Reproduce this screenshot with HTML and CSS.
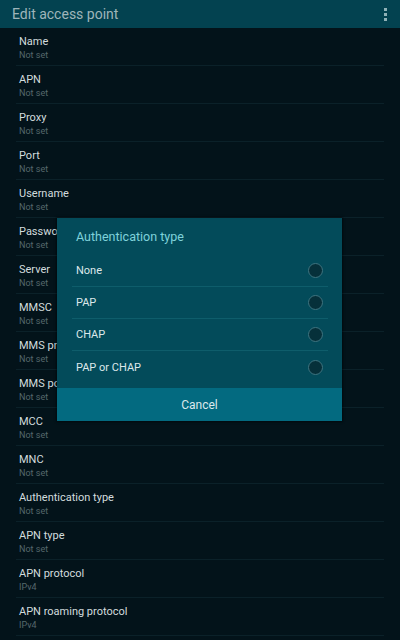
FILE: index.html
```html
<!DOCTYPE html>
<html>
<head>
<meta charset="utf-8">
<link rel="stylesheet" href="styles.css">
</head>
<body>
<div class="screen">
  <header class="appbar">
    <span class="title">Edit access point</span>
    <span class="menu"><i></i><i></i><i></i></span>
  </header>
  <ul class="list">
    <li class="row"><span class="label">Name</span><span class="value">Not set</span></li>
    <li class="row"><span class="label">APN</span><span class="value">Not set</span></li>
    <li class="row"><span class="label">Proxy</span><span class="value">Not set</span></li>
    <li class="row"><span class="label">Port</span><span class="value">Not set</span></li>
    <li class="row"><span class="label">Username</span><span class="value">Not set</span></li>
    <li class="row"><span class="label">Password</span><span class="value">Not set</span></li>
    <li class="row"><span class="label">Server</span><span class="value">Not set</span></li>
    <li class="row"><span class="label">MMSC</span><span class="value">Not set</span></li>
    <li class="row"><span class="label">MMS proxy</span><span class="value">Not set</span></li>
    <li class="row"><span class="label">MMS port</span><span class="value">Not set</span></li>
    <li class="row"><span class="label">MCC</span><span class="value">Not set</span></li>
    <li class="row"><span class="label">MNC</span><span class="value">Not set</span></li>
    <li class="row"><span class="label">Authentication type</span><span class="value">Not set</span></li>
    <li class="row"><span class="label">APN type</span><span class="value">Not set</span></li>
    <li class="row"><span class="label">APN protocol</span><span class="value">IPv4</span></li>
    <li class="row"><span class="label">APN roaming protocol</span><span class="value">IPv4</span></li>
  </ul>
  <div class="dialog">
    <div class="dialog-title">Authentication type</div>
    <ul class="options">
      <li class="option"><span>None</span><span class="radio"></span></li>
      <li class="option"><span>PAP</span><span class="radio"></span></li>
      <li class="option"><span>CHAP</span><span class="radio"></span></li>
      <li class="option"><span>PAP or CHAP</span><span class="radio"></span></li>
    </ul>
    <div class="cancel">Cancel</div>
  </div>
</div>
</body>
</html>
```
FILE: styles.css
```css
* { box-sizing: border-box; }
html, body { margin: 0; padding: 0; }
body {
  background: #03131a;
  font-family: Roboto, "Noto Sans", sans-serif;
  width: 400px;
  height: 640px;
  overflow: hidden;
}
.screen { position: relative; width: 400px; height: 640px; }
.appbar {
  height: 28px;
  background: #034250;
  display: flex;
  align-items: center;
  justify-content: space-between;
  padding: 0 12px;
}
.title {
  color: #9fb5ba;
  font-size: 14px;
  font-weight: 400;
}
.menu {
  display: flex;
  flex-direction: column;
  gap: 2px;
  margin-right: 1px;
}
.menu i {
  display: block;
  width: 3px;
  height: 3px;
  background: #8fb1b7;
}
.list {
  list-style: none;
  margin: 0 16px;
  padding: 0;
}
.row {
  height: 38px;
  border-bottom: 1px solid #0b2129;
  padding: 7px 3px 0;
  display: flex;
  flex-direction: column;
}
.label {
  color: #d2dcde;
  font-size: 11px;
  line-height: 14px;
}
.value {
  color: #56686c;
  font-size: 9px;
  line-height: 12px;
}
.dialog {
  position: absolute;
  left: 57px;
  top: 218px;
  width: 285px;
  height: 203px;
  background: #034b5a;
  box-shadow: 0 0 2px 1px rgba(0,0,0,0.5);
  display: flex;
  flex-direction: column;
}
.dialog-title {
  height: 37px;
  padding: 0 19px;
  display: flex;
  align-items: center;
  color: #7fd2da;
  font-size: 12.5px;
}
.options {
  list-style: none;
  margin: 0 14px 0 15px;
  padding: 0;
  flex: 1;
}
.option {
  height: 32px;
  border-bottom: 1px solid #0e5d6b;
  display: flex;
  align-items: center;
  justify-content: space-between;
  padding: 0 5px 0 4px;
  color: #dde8ea;
  font-size: 11px;
}
.option:last-child { border-bottom: none; }
.radio {
  width: 15px;
  height: 15px;
  border-radius: 50%;
  background: #06303a;
  border: 1px solid #3f7480;
}
.cancel {
  height: 33px;
  background: #036a80;
  color: #dbe9ec;
  font-size: 12px;
  display: flex;
  align-items: center;
  justify-content: center;
  padding-top: 1px;
}
```
